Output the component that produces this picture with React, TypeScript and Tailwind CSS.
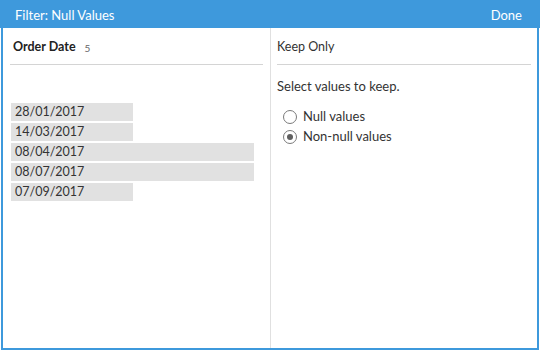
import React, { useState } from 'react';

const dates = [
  { label: '28/01/2017', wide: false },
  { label: '14/03/2017', wide: false },
  { label: '08/04/2017', wide: true },
  { label: '08/07/2017', wide: true },
  { label: '07/09/2017', wide: false },
];

export default function App() {
  const [keep, setKeep] = useState<'null' | 'nonnull'>('nonnull');

  return (
    <div
      className="w-[540px] h-[350px] flex flex-col bg-white overflow-hidden"
      style={{ fontFamily: 'Lato, "Open Sans", sans-serif' }}
    >
      {/* header */}
      <div className="h-[28px] shrink-0 bg-[#3e99dc] flex items-center justify-between pt-[3px] pl-[15px] pr-[18px] text-white text-[13px]">
        <span>Filter: Null Values</span>
        <span>Done</span>
      </div>

      {/* body */}
      <div className="flex-1 flex ml-[1px] mr-[1px] border-x-2 border-b-2 border-[#3e99dc]">
        {/* left column */}
        <div className="w-[268px] border-r border-[#e0e0e0] flex flex-col">
          <div className="h-[37px] mx-[7px] flex items-end pb-[7px] pl-[3px] border-b border-[#d4d4d4]">
            <span className="text-[12.5px] font-bold text-[#222]">Order Date</span>
            <span className="ml-[9px] text-[10px] text-[#666] mb-[1px]">5</span>
          </div>
          <div className="mt-[38px] ml-[8px] flex flex-col gap-[2px]">
            {dates.map((d) => (
              <div
                key={d.label}
                className={`h-[18px] bg-[#e1e1e1] flex items-center pl-[4px] text-[12.5px] text-[#333] ${d.wide ? 'w-[243px]' : 'w-[122px]'}`}
              >
                {d.label}
              </div>
            ))}
          </div>
        </div>

        {/* right column */}
        <div className="flex-1 flex flex-col">
          <div className="h-[37px] ml-[6px] mr-[6px] flex items-end pb-[7px] border-b border-[#d4d4d4] text-[12.5px] text-[#333]">
            Keep Only
          </div>
          <div className="ml-[6px] mt-[12px] text-[13px] text-[#333]">Select values to keep.</div>
          <div className="ml-[12px] mt-[12px] flex flex-col gap-[4px]">
            {[
              { id: 'null' as const, label: 'Null values' },
              { id: 'nonnull' as const, label: 'Non-null values' },
            ].map((o) => (
              <label key={o.id} className="h-[16px] flex items-center gap-[6px] text-[13px] text-[#333] cursor-pointer" onClick={() => setKeep(o.id)}>
                <span className="w-[14px] h-[14px] rounded-full border border-[#7a7a7a] bg-white flex items-center justify-center">
                  {keep === o.id && <span className="w-[6px] h-[6px] rounded-full bg-[#5f5f5f]" />}
                </span>
                {o.label}
              </label>
            ))}
          </div>
        </div>
      </div>
    </div>
  );
}
